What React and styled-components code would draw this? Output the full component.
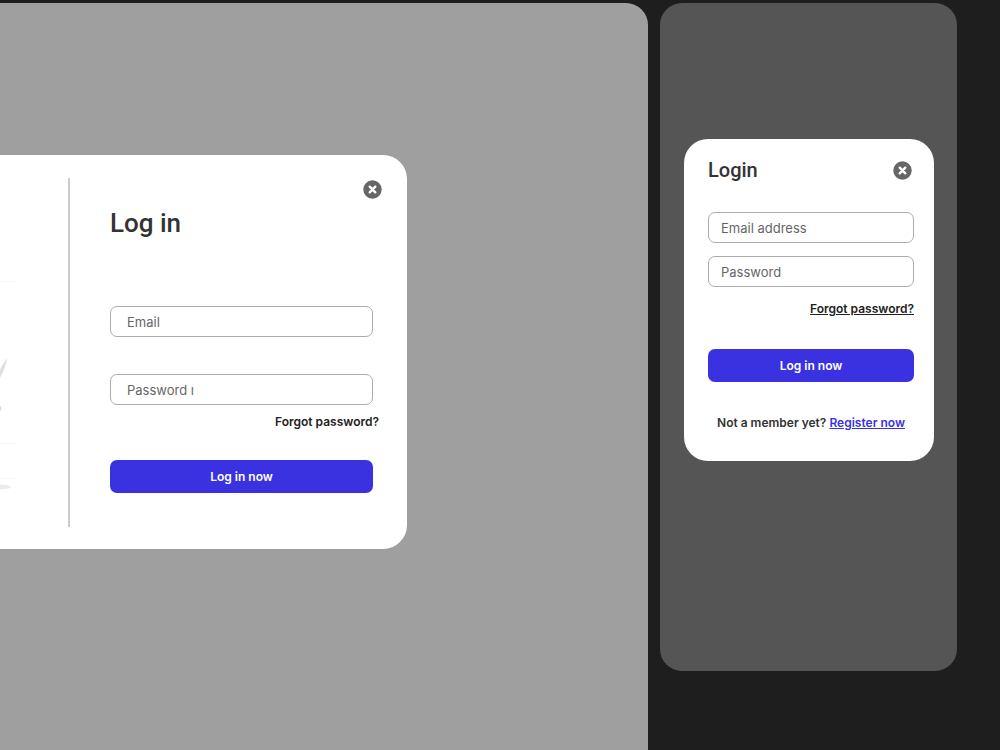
import React from "react";
import styled, { createGlobalStyle } from "styled-components";

const GlobalStyle = createGlobalStyle`
  * {
    box-sizing: border-box;
  }

  body {
    margin: 0;
    background: #1e1e1e;
    color: #333;
    font-family: Inter, "Liberation Sans", sans-serif;
    font-size: 12px;
    line-height: 16px;
  }
`;

const Board = styled.main`
  display: flex;
  align-items: flex-start;
  gap: 12px;
  min-height: 100vh;
  padding: 3px 43px 0 0;
`;

const DesktopFrame = styled.section`
  flex: 1;
  align-self: stretch;
  padding: 152px 241px 0 0;
  border-top-right-radius: 22px;
  background: #9f9f9f;
`;

const DesktopCard = styled.div`
  display: flex;
  padding: 23px 0 22px;
  border-radius: 0 24px 24px 0;
  background: #fff;
`;

const Illustration = styled.div`
  flex: 1;
  overflow: hidden;

  svg {
    display: block;
  }
`;

const DesktopPanel = styled.div`
  display: flex;
  flex-direction: column;
  gap: 8px;
  width: 339px;
  padding: 2px 25px 34px 40px;
  border-left: 2px solid #cbcbcb;
`;

const MobileFrame = styled.section`
  width: 297px;
  padding: 136px 23px 210px 24px;
  border-radius: 22px;
  background: #555;
`;

const MobileCard = styled.div`
  padding: 20px 20px 30px 24px;
  border-radius: 24px;
  background: #fff;
`;

const MobileHeader = styled.header`
  display: flex;
  align-items: center;
  justify-content: space-between;
  padding-right: 2px;
`;

const Title = styled.h2`
  margin: 0;
  font-family: Roboto, "Liberation Sans", sans-serif;
  font-size: ${({ $large }) => ($large ? "26px" : "20px")};
  line-height: ${({ $large }) => ($large ? "32px" : "22px")};
  font-weight: 500;
`;

const CloseButton = styled.button`
  display: block;
  align-self: ${({ $end }) => ($end ? "flex-end" : "center")};
  width: 19px;
  height: 19px;
  padding: 0;
  border: 0;
  background: none;
  cursor: pointer;

  svg {
    display: block;
  }
`;

const DesktopForm = styled.form`
  display: flex;
  flex-direction: column;
  padding: 59px 9px 0 0;
`;

const MobileForm = styled.form`
  display: flex;
  flex-direction: column;
  padding-top: 31px;
`;

const Fields = styled.div`
  display: flex;
  flex-direction: column;
  gap: ${({ $gap }) => $gap}px;
`;

const Input = styled.input`
  width: 100%;
  height: 31px;
  padding: 0 ${({ $inset }) => $inset}px;
  border: 1px solid #acacac;
  border-radius: 7px;
  background: #fff;
  color: #333;
  font: inherit;
  font-size: 13px;

  &::placeholder {
    color: #666;
    opacity: 1;
  }
`;

const ForgotLink = styled.a`
  color: #222;
  font-weight: 600;
  text-decoration: ${({ $underlined }) => ($underlined ? "underline" : "none")};
`;

const ForgotRow = styled.div`
  display: flex;
  justify-content: flex-end;
  margin: ${({ $desktop }) => ($desktop ? "9px -6px 30px 0" : "14px 0 32px")};
`;

const SubmitButton = styled.button`
  height: 33px;
  border: 0;
  border-radius: 7px;
  background: #3a32e0;
  color: #fff;
  font: inherit;
  font-weight: 600;
  cursor: pointer;
`;

const Register = styled.p`
  margin: 33px 0 0;
  font-weight: 600;
  text-align: center;
  white-space: nowrap;

  a {
    color: #3a32e0;
  }
`;

const CloseIcon = () => (
  <svg width="19" height="19" viewBox="0 0 19 19" aria-hidden="true">
    <circle cx="9.5" cy="9.5" r="9.2" fill="#666" />
    <path
      d="M6.7 6.7l5.6 5.6M12.3 6.7l-5.6 5.6"
      stroke="#fff"
      strokeWidth="2.4"
      strokeLinecap="round"
    />
  </svg>
);

const Sketch = () => (
  <svg width="16" height="349" viewBox="0 0 16 349" aria-hidden="true">
    <path d="M0 103.5h16M0 265.5h16M0 300.5h16" stroke="#f8f8f8" />
    <path d="M7 180C4 184 2 188 0 192v8c2-4 6-12 7-20z" fill="#dedede" />
    <path d="M0 228c2 0 2 4 0 5z" fill="#dedede" />
    <ellipse cx="0" cy="309" rx="11" ry="2.5" fill="#ececec" />
  </svg>
);

const handleSubmit = (event) => {
  event.preventDefault();
};

const DesktopLogin = () => (
  <DesktopCard>
    <Illustration>
      <Sketch />
    </Illustration>
    <DesktopPanel>
      <CloseButton type="button" aria-label="Close" $end>
        <CloseIcon />
      </CloseButton>
      <Title $large>Log in</Title>
      <DesktopForm onSubmit={handleSubmit}>
        <Fields $gap={37}>
          <Input type="email" aria-label="Email" placeholder="Email" $inset={16} />
          <Input type="password" aria-label="Password" placeholder="Password ı" $inset={16} />
        </Fields>
        <ForgotRow $desktop>
          <ForgotLink href="#forgot">Forgot password?</ForgotLink>
        </ForgotRow>
        <SubmitButton type="submit">Log in now</SubmitButton>
      </DesktopForm>
    </DesktopPanel>
  </DesktopCard>
);

const MobileLogin = () => (
  <MobileCard>
    <MobileHeader>
      <Title>Login</Title>
      <CloseButton type="button" aria-label="Close">
        <CloseIcon />
      </CloseButton>
    </MobileHeader>
    <MobileForm onSubmit={handleSubmit}>
      <Fields $gap={13}>
        <Input type="email" aria-label="Email address" placeholder="Email address" $inset={12} />
        <Input type="password" aria-label="Password" placeholder="Password" $inset={12} />
      </Fields>
      <ForgotRow>
        <ForgotLink href="#forgot" $underlined>Forgot password?</ForgotLink>
      </ForgotRow>
      <SubmitButton type="submit">Log in now</SubmitButton>
    </MobileForm>
    <Register>
      Not a member yet? <a href="#register">Register now</a>
    </Register>
  </MobileCard>
);

export default function App() {
  return (
    <>
      <GlobalStyle />
      <Board>
        <DesktopFrame>
          <DesktopLogin />
        </DesktopFrame>
        <MobileFrame>
          <MobileLogin />
        </MobileFrame>
      </Board>
    </>
  );
}
